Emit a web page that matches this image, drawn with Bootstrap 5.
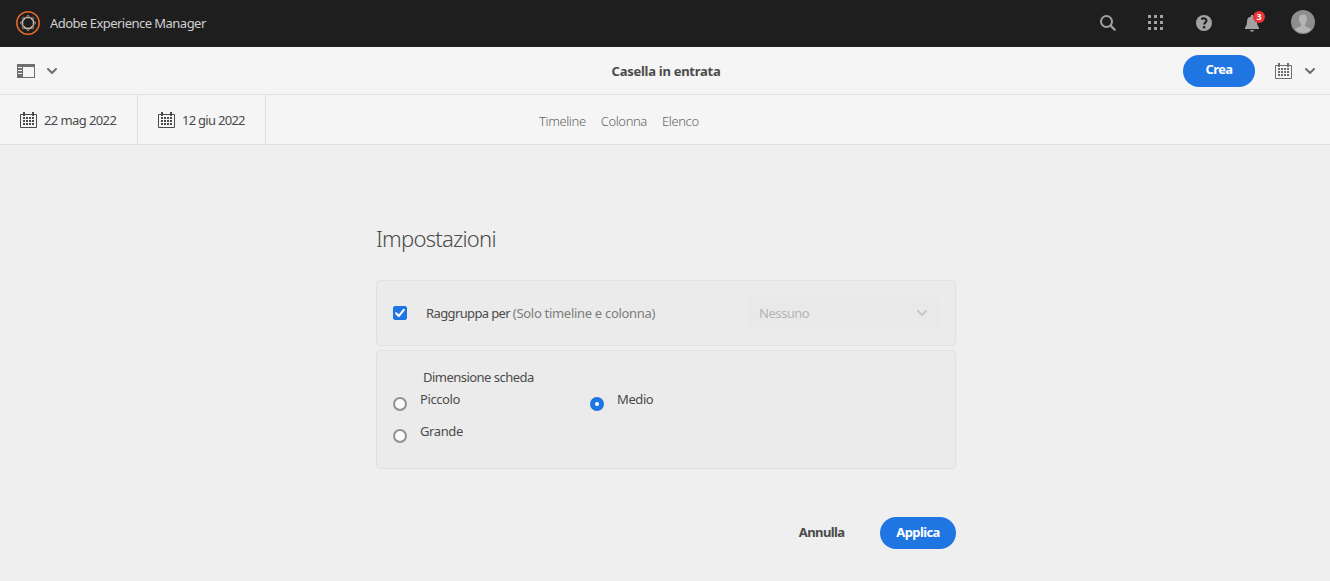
<!DOCTYPE html>
<html lang="it">
<head>
<meta charset="utf-8">
<meta name="viewport" content="width=device-width, initial-scale=1">
<title>Casella in entrata</title>
<link href="https://cdn.jsdelivr.net/npm/bootstrap@5.3.0/dist/css/bootstrap.min.css" rel="stylesheet">
<style>
body{font-family:"Noto Sans","Open Sans",sans-serif;font-size:13px;line-height:20px;letter-spacing:-.5px;background:#efefef;color:#4b4b4b;height:581px;overflow:hidden}
svg{display:block;flex:none}
.shell{height:47px;background:#1e1e1e;color:#d0d0d0;padding:0 15px 2px 16px}
.shell-icons{color:#a2a2a2}
.shell-icons>*{margin-right:32px}
.shell-icons>.bell{margin-right:31px}
.shell-icons>:last-child{margin-right:0;margin-bottom:2px}
.shell-title{margin-left:10px;letter-spacing:-.53px}
.bar-top{height:48px;background:#f5f5f5;border-bottom:1px solid #e1e1e1;padding:0 15px 0 17px}
.bar-side{flex:1 1 0;color:#6e6e6e}
.bar-chev{margin:1px 0 0 12px}
.page-title{font-weight:700;letter-spacing:-.27px}
.bar-sub{height:50px;background:#f5f5f5;border-bottom:1px solid #e1e1e1}
.date-cell{border-right:1px solid #e1e1e1;gap:6px;padding-left:20px;letter-spacing:-.6px}
.date-from{width:138px}
.date-to{width:128px;letter-spacing:-.72px}
.view-links{gap:15px;color:#666;font-weight:300;margin-left:273px;padding-top:2px;letter-spacing:-.38px}
.blue-btn{--bs-btn-bg:#1f76e2;--bs-btn-color:#fff;--bs-btn-hover-bg:#1767c8;--bs-btn-hover-color:#fff;--bs-btn-border-width:0;height:32px;font-size:13px;font-weight:700;line-height:20px;padding:0 0 2px;letter-spacing:-.6px}
.btn-crea{width:72px;margin-right:20px;padding-bottom:3px}
.btn-applica{width:76px}
.settings{width:580px;margin:75px 0 0 376px}
.settings h1{font-size:22px;font-weight:300;line-height:36px;margin:0 0 24px;letter-spacing:-.75px}
.panel{background:#ebebeb;border:1px solid #e1e1e1;border-radius:4px}
.panel-group{height:66px;padding:0 16px;margin-bottom:4px}
.panel-size{height:119px;padding:16px}
.group-label{margin-left:19px;letter-spacing:-.62px}
.size-label{padding-left:30px;letter-spacing:-.53px}
.form-check-input.cb{width:14px;height:14px;margin:0;border-radius:2px}
.form-check-input.cb:checked{background-color:#1f76e2;border-color:#1f76e2;background-image:url("data:image/svg+xml,%3csvg xmlns='http://www.w3.org/2000/svg' viewBox='0 0 14 14'%3e%3cpath fill='none' stroke='%23fff' stroke-width='2.1' stroke-linecap='round' stroke-linejoin='round' d='M3.100 7.300l2.700 2.700 5-6.200'/%3e%3c/svg%3e");background-size:14px 14px}
.rd{width:14px;height:14px;border-radius:50%;border:2px solid #909090;background:#fafafa;margin-top:8px;flex:none}
.rd.on{border:5px solid #1f76e2;background:#fff}
.choice{height:32px;gap:13px;letter-spacing:-.4px}
.choice-col{width:197px}
.hint{color:#7d7d7d;letter-spacing:-.3px}
.drop{width:192px;height:32px;background:#e9e9e9;border-radius:4px;padding:0 12px;color:#b4b4b4}
.drop svg{color:#c8c8c8}
.actions{margin-top:48px}
.cancel{font-weight:700;margin-right:35.5px;padding-bottom:2px;letter-spacing:-.6px}
.count{left:9px;top:-3px;width:12px;height:12px;border-radius:50%;background:#ec3434;color:#fff;font-size:9px;line-height:12px;font-weight:700;letter-spacing:0}
</style>
</head>
<body>
<svg class="d-none">
  <symbol id="cal" viewBox="0 0 18 16"><path d="M.5 2.500h16v13H.5z" fill="none" stroke="currentColor"/><path d="M3 0h2v4H3zM12 0h2v4h-2zM6 5h2v2H6zM9 5h2v2H9zM12 5h2v2h-2zM3 5h2v2H3zM3 8h2v2H3zM6 8h2v2H6zM9 8h2v2H9zM12 8h2v2h-2zM3 11h2v2H3zM6 11h2v2H6zM9 11h2v2H9zM12 11h2v2h-2z" fill="currentColor"/></symbol>
  <symbol id="chev" viewBox="0 0 10 7"><path d="M1 1l4 4 4-4" fill="none" stroke="currentColor" stroke-width="2" stroke-linecap="round" stroke-linejoin="round"/></symbol>
</svg>
<header class="shell d-flex align-items-center justify-content-between">
  <div class="d-flex align-items-center">
    <svg width="24" height="24" viewBox="0 0 24 24" fill="none"><circle cx="12" cy="12" r="11.200" stroke="#e6692a" stroke-width="1.500"/><g stroke="#cbb7ab"><circle cx="12" cy="12" r="5.700" stroke-width="1.200"/><g stroke-width=".7"><circle cx="12" cy="5.800" r="1.300"/><circle cx="16.400" cy="7.600" r="1.300"/><circle cx="18.200" cy="12" r="1.300"/><circle cx="16.400" cy="16.400" r="1.300"/><circle cx="12" cy="18.200" r="1.300"/><circle cx="7.600" cy="16.400" r="1.300"/><circle cx="5.800" cy="12" r="1.300"/><circle cx="7.600" cy="7.600" r="1.300"/></g></g></svg>
    <span class="shell-title">Adobe Experience Manager</span>
  </div>
  <div class="shell-icons d-flex align-items-center">
    <svg width="16" height="16" viewBox="0 0 16 16" fill="none" stroke="currentColor"><circle cx="6.500" cy="6.500" r="5.500" stroke-width="2"/><path d="M10.600 10.600l4.100 4.100" stroke-width="2.200" stroke-linecap="round"/></svg>
    <svg width="16" height="15" viewBox="0 0 16 15" fill="currentColor"><path d="M0 0h3v3H0zM6 0h3v3H6zM12 0h3v3h-3zM0 6h3v3H0zM6 6h3v3H6zM12 6h3v3h-3zM0 12h3v3H0zM6 12h3v3H6zM12 12h3v3h-3z"/></svg>
    <svg width="16" height="16" viewBox="0 0 16 16"><circle cx="8" cy="8" r="8" fill="currentColor"/><path d="M5.300 4.100C7.500 2.700 10.600 3.400 10.500 5.600c0 1.800-2.400 2.200-2.400 4" fill="none" stroke="#1e1e1e" stroke-width="2.100"/><circle cx="8.100" cy="12.200" r="1.300" fill="#1e1e1e"/></svg>
    <div class="bell position-relative">
      <svg width="16" height="18" viewBox="0 0 16 18" fill="currentColor"><path d="M7 1h2v1.500c3 .5 4 2.500 4 5 0 3 .5 4.500 2 6V15H1v-1.500c1.500-1.500 2-3 2-6 0-2.500 1-4.500 4-5zM6 16h4q-.3 1.700-2 1.700T6 16z"/></svg>
      <span class="count position-absolute text-center">3</span>
    </div>
    <svg width="24" height="24" viewBox="0 0 24 24"><circle cx="12" cy="12" r="12" fill="#8e8e8e"/><path d="M12 4.500c-3 0-4 2-4 4.500 0 2 .8 3.500 2 4.800v2.200c-1 1-4.500 1.500-6 3.500a11.200 11.200 0 0 0 16 0c-1.500-2-5-2.500-6-3.500v-2.200c1.200-1.300 2-2.800 2-4.800 0-2.500-1-4.500-4-4.500z" fill="#b4b4b4"/></svg>
  </div>
</header>
<div class="bar-top d-flex align-items-center">
  <div class="bar-side d-flex align-items-center">
    <svg width="18" height="14" viewBox="0 0 18 14"><path d="M0 0h18v14H0z" fill="currentColor"/><path d="M6 3h11v10H6z" fill="#f5f5f5"/><path d="M1 3h4v1H1zM1 6h4v1H1zM1 9h4v1H1z" fill="#f5f5f5"/></svg>
    <svg class="bar-chev" width="10" height="7"><use href="#chev"/></svg>
  </div>
  <div class="page-title">Casella in entrata</div>
  <div class="bar-side d-flex align-items-center justify-content-end">
    <button class="btn blue-btn btn-crea rounded-pill">Crea</button>
    <svg width="18" height="16"><use href="#cal"/></svg>
    <svg class="bar-chev" width="10" height="7"><use href="#chev"/></svg>
  </div>
</div>
<div class="bar-sub d-flex">
  <div class="date-cell date-from d-flex align-items-center"><svg width="18" height="16"><use href="#cal"/></svg><span>22 mag 2022</span></div>
  <div class="date-cell date-to d-flex align-items-center"><svg width="18" height="16"><use href="#cal"/></svg><span>12 giu 2022</span></div>
  <nav class="view-links d-flex align-items-center"><span>Timeline</span><span>Colonna</span><span>Elenco</span></nav>
</div>
<main class="settings">
  <h1>Impostazioni</h1>
  <section class="panel panel-group d-flex align-items-center">
    <input class="form-check-input cb" type="checkbox" checked aria-label="Raggruppa per">
    <span class="group-label">Raggruppa per <span class="hint">(Solo timeline e colonna)</span></span>
    <div class="drop ms-auto d-flex align-items-center justify-content-between"><span>Nessuno</span><svg width="10" height="7"><use href="#chev"/></svg></div>
  </section>
  <section class="panel panel-size">
    <div class="size-label">Dimensione scheda</div>
    <div class="d-flex flex-wrap" style="padding-top:2px">
      <label class="choice choice-col d-flex"><span class="rd"></span>Piccolo</label>
      <label class="choice choice-col d-flex"><span class="rd on"></span>Medio</label>
      <label class="choice w-100 d-flex"><span class="rd"></span>Grande</label>
    </div>
  </section>
  <div class="actions d-flex align-items-center justify-content-end">
    <span class="cancel">Annulla</span>
    <button class="btn blue-btn btn-applica rounded-pill">Applica</button>
  </div>
</main>
<script src="https://cdn.jsdelivr.net/npm/bootstrap@5.3.0/dist/js/bootstrap.bundle.min.js"></script>
</body>
</html>
